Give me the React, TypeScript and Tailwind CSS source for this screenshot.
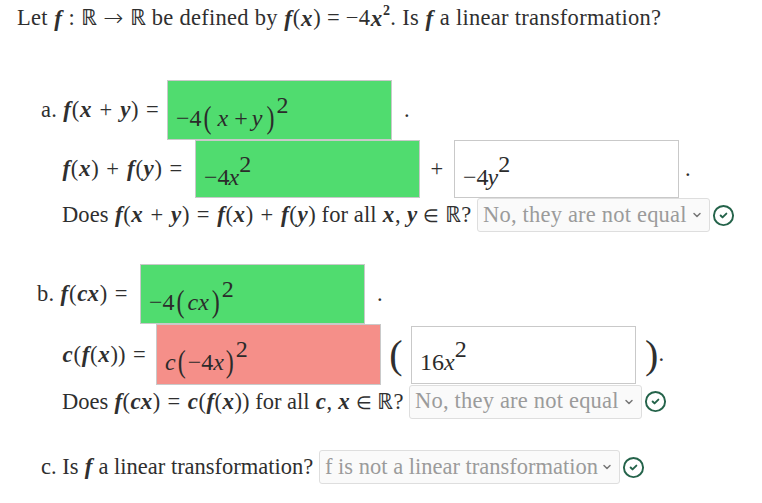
import type { ReactNode } from "react";
import { ChevronDown, CircleCheck } from "lucide-react";

function V({ children }: { children: ReactNode }) {
  return <i className="mx-[0.5px] font-bold text-[23px]">{children}</i>;
}

function Op({ children }: { children: ReactNode }) {
  return <span className="mx-[1.5px]">{children}</span>;
}

function Box({ children, tone = "bg-white", className = "" }: { children: ReactNode; tone?: string; className?: string }) {
  return (
    <div className={`flex w-[225px] shrink-0 items-center border border-[#c9c9c9] pl-[8px] pt-[6px] font-['Liberation_Serif',serif] text-[24px] tracking-normal text-[#2b2b2b] ${tone} ${className}`}>
      <span className="whitespace-nowrap">{children}</span>
    </div>
  );
}

function Big({ children }: { children: ReactNode }) {
  return <span className="mx-[2px] inline-block origin-center scale-y-[1.3] text-[24px] font-light leading-none">{children}</span>;
}

function Sup({ children }: { children: ReactNode }) {
  return <sup className="relative top-[-4px] text-[24px] leading-none align-super">{children}</sup>;
}

function Picker({ label, width, spacing = "tracking-normal" }: { label: string; width: string; spacing?: string }) {
  return (
    <div className="flex items-center gap-[2px]">
      <div className={`flex h-[34px] items-center justify-between rounded-[3px] border border-[#dedede] bg-[#fafafa] pl-[5px] pr-[6px] text-[#9b9b9b] ${spacing} ${width}`}>
        <span className="whitespace-nowrap">{label}</span>
        <ChevronDown size={12} strokeWidth={3} color="#777" />
      </div>
      <CircleCheck size={23} strokeWidth={2} color="#24634a" />
    </div>
  );
}

export default function App() {
  return (
    <div className="h-[503px] w-[762px] overflow-hidden bg-white pl-[17px] font-['Liberation_Serif',serif] text-[22.5px] leading-none tracking-[0.2px] text-[#2f2f2f]">
      <p className="flex h-[36px] items-center whitespace-pre tracking-[0.28px]">
        Let <V>f</V> : ℝ <span className="font-['DejaVu_Sans',sans-serif] text-[24px] font-extralight">→</span> ℝ be defined by <V>f</V>(<V>x</V>) = −4<V>x</V><sup className="text-[14px] font-bold">2</sup>. Is <V>f</V> a linear transformation?
      </p>

      <section className="mt-[44px] pl-[24px]">
        <div className="flex h-[60px] items-center">
          <span className="w-[126px] whitespace-pre">a. <V>f</V>(<V>x</V><Op> + </Op><V>y</V>)<Op> =</Op></span>
          <Box tone="bg-[#50dc6f]" className="h-[60px]">−4<Big>(</Big><i className="mx-[4px]">x</i><span className="mx-[2px]">+</span><i className="mx-[2px]">y</i><Big>)</Big><Sup>2</Sup></Box>
          <span className="ml-[12px]">.</span>
        </div>
        <div className="flex h-[58px] items-center pl-[21px]">
          <span className="w-[133px] whitespace-pre"><V>f</V>(<V>x</V>)<Op> + </Op><V>f</V>(<V>y</V>)<Op> =</Op></span>
          <Box tone="bg-[#50dc6f]" className="h-[58px]">−4<i className="ml-[-1px]">x</i><Sup>2</Sup></Box>
          <span className="w-[34px] text-center">+</span>
          <Box className="h-[58px]">−4<i className="ml-[-1px]">y</i><Sup>2</Sup></Box>
          <span className="ml-[6px]">.</span>
        </div>
        <div className="flex h-[34px] items-center pl-[21px]">
          <span className="w-[415px] whitespace-pre tracking-[0.1px]">Does <V>f</V>(<V>x</V><Op> + </Op><V>y</V>)<Op> = </Op><V>f</V>(<V>x</V>)<Op> + </Op><V>f</V>(<V>y</V>) for all <V>x</V>, <V>y</V> <span className="text-[18px]">∈</span> ℝ?</span>
          <Picker label="No, they are not equal" width="w-[233px]" spacing="tracking-[0.2px]" />
        </div>
      </section>

      <section className="mt-[32px] pl-[20px]">
        <div className="flex h-[60px] items-center">
          <span className="w-[103px] whitespace-pre">b. <V>f</V>(<V>cx</V>)<Op> =</Op></span>
          <Box tone="bg-[#50dc6f]" className="h-[60px]">−4<Big>(</Big><i className="mx-[1px]">cx</i><Big>)</Big><Sup>2</Sup></Box>
          <span className="ml-[12px]">.</span>
        </div>
        <div className="flex h-[61px] items-center pl-[25px]">
          <span className="w-[94px] whitespace-pre"><V>c</V>(<V>f</V>(<V>x</V>))<Op> =</Op></span>
          <Box tone="bg-[#f58f89]" className="h-[61px]"><i>c</i><Big>(</Big>−4<i>x</i><Big>)</Big><Sup>2</Sup></Box>
          <span className="w-[30px] text-center text-[40px] font-light">(</span>
          <Box className="h-[58px]">16<i>x</i><Sup>2</Sup></Box>
          <span className="ml-[9px] text-[40px] font-light">)</span>
          <span>.</span>
        </div>
        <div className="flex h-[33px] items-center pl-[25px]">
          <span className="w-[347px] whitespace-pre tracking-normal">Does <V>f</V>(<V>cx</V>)<Op> = </Op><V>c</V>(<V>f</V>(<V>x</V>)) for all <V>c</V>, <V>x</V> <span className="text-[18px]">∈</span> ℝ?</span>
          <Picker label="No, they are not equal" width="w-[233px]" spacing="tracking-[0.2px]" />
        </div>
      </section>

      <section className="mt-[32px] flex items-center pl-[24px]">
        <span className="w-[278px] whitespace-pre tracking-normal">c. Is <V>f</V> a linear transformation?</span>
        <Picker label="f is not a linear transformation" width="w-[301px]" />
      </section>
    </div>
  );
}
